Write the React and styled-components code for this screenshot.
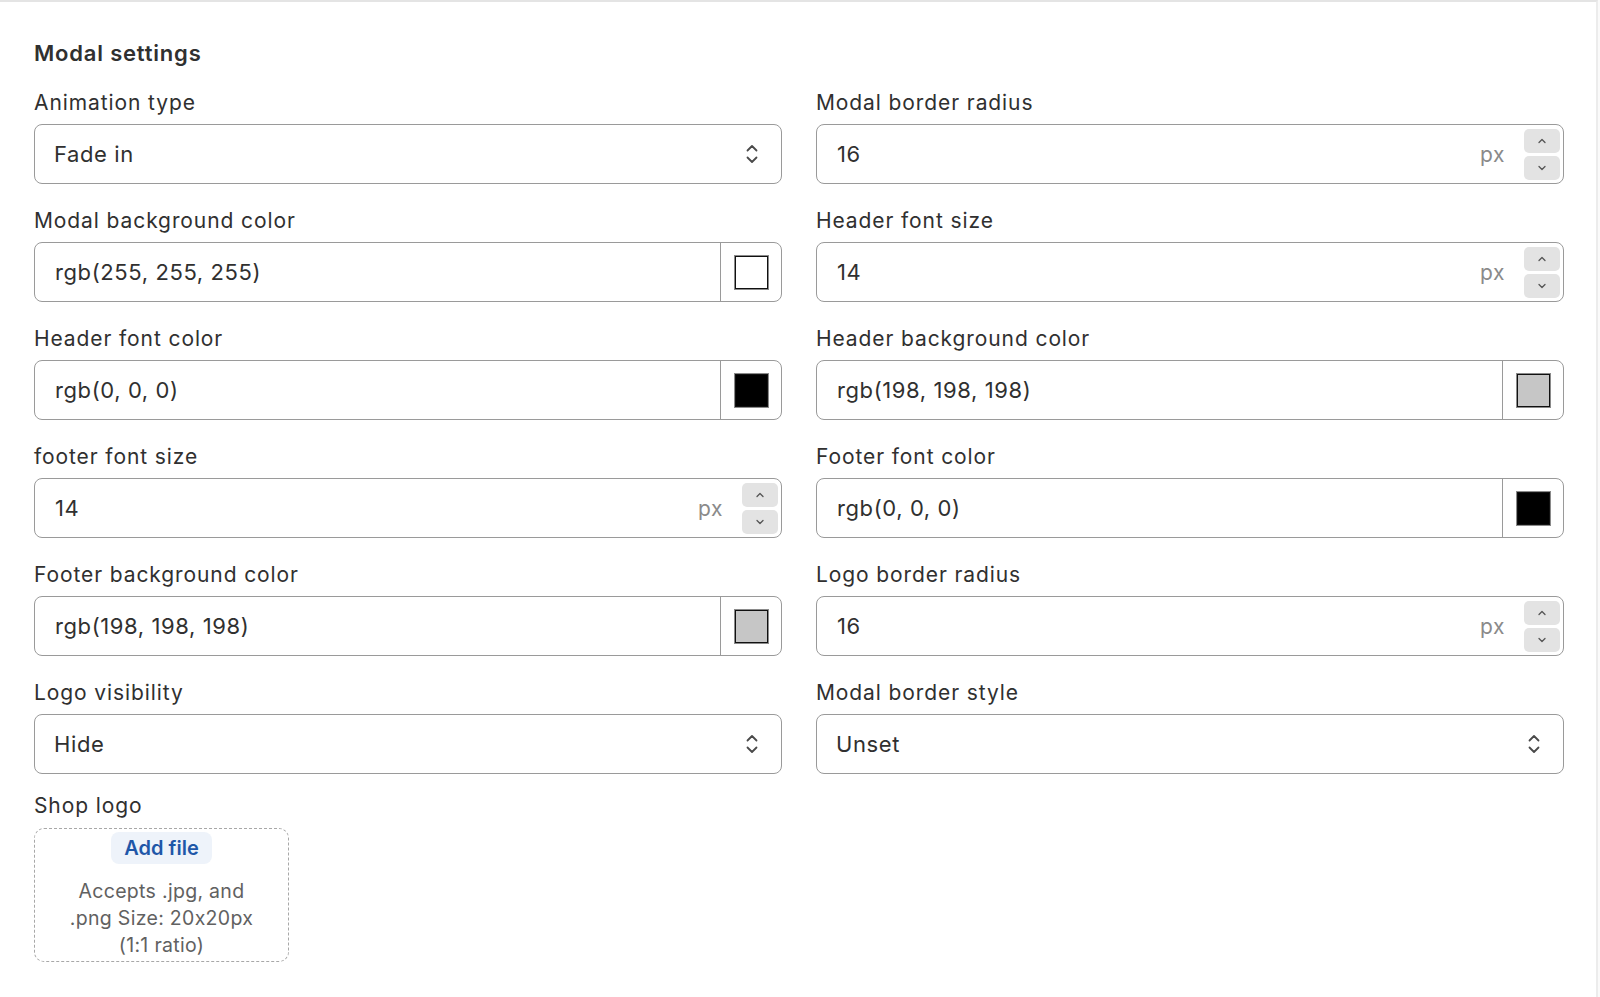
import React from 'react'
import styled, { createGlobalStyle } from 'styled-components'

const GlobalStyle = createGlobalStyle`
  body {
    margin: 0;
    background: #fafafa;
    font-family: Inter, "Noto Sans", sans-serif;
    font-feature-settings: "calt" 0;
    color: #303030;
  }
`

const Page = styled.div`
  box-sizing: border-box;
  width: 1598px;
  min-height: 997px;
  background: #fff;
  border-top: 2px solid #e4e4e4;
  border-right: 2px solid #ececec;
  padding: 37px 32px 40px 34px;
`

const Heading = styled.h2`
  margin: 0 0 24px;
  font-size: 22px;
  line-height: 28px;
  font-weight: 600;
  letter-spacing: 0.8px;
  color: #303030;
`

const Grid = styled.div`
  display: grid;
  grid-template-columns: 1fr 1fr;
  column-gap: 34px;
  row-gap: 25px;
`

const Field = styled.div`
  display: flex;
  flex-direction: column;
  gap: 9px;
  margin-top: ${p => (p.$tight ? '-5px' : '0')};
`

const Label = styled.label`
  font-size: 21px;
  line-height: 24px;
  letter-spacing: 0.9px;
  color: #303030;
`

const Box = styled.div`
  box-sizing: border-box;
  height: 60px;
  display: flex;
  align-items: center;
  border: 1.5px solid #9a9a9a;
  border-radius: 8px;
  background: #fff;
  font-size: 22px;
  letter-spacing: 0.6px;
  color: #303030;
  overflow: hidden;
`

const Value = styled.span`
  flex: 1;
  padding-left: ${p => p.$pad || 19}px;
`

const Suffix = styled.span`
  color: #8a8a8a;
  font-size: 21px;
  margin-right: 19px;
`

const Spinner = styled.div`
  display: flex;
  flex-direction: column;
  gap: 3px;
  margin-right: 3px;
`

const SpinButton = styled.div`
  width: 36px;
  height: 24px;
  border-radius: 5px;
  background: #e3e3e3;
  display: flex;
  align-items: center;
  justify-content: center;
  color: #555;
`

const SwatchCell = styled.div`
  align-self: stretch;
  width: 60px;
  border-left: 1.5px solid #9a9a9a;
  display: flex;
  align-items: center;
  justify-content: center;
`

const Swatch = styled.div`
  box-sizing: border-box;
  width: 35px;
  height: 35px;
  background: ${p => p.$color};
  border: 1px solid #8a8a8a;
  box-shadow: inset 0 0 0 1px #111;
`

const SelectIcon = styled.span`
  margin-right: 22px;
  display: flex;
  color: #4a4a4a;
`

const DropZone = styled.div`
  box-sizing: border-box;
  margin-top: 1px;
  width: 255px;
  height: 134px;
  border: 1.5px dashed #a8a8a8;
  border-radius: 10px;
  display: flex;
  flex-direction: column;
  align-items: center;
  padding-top: 3px;
`

const AddButton = styled.div`
  width: 101px;
  height: 32px;
  border-radius: 8px;
  background: #eef3fa;
  color: #1f57a8;
  font-weight: 600;
  font-size: 20px;
  display: flex;
  align-items: center;
  justify-content: center;
`

const Hint = styled.div`
  margin-top: 14px;
  text-align: center;
  color: #616161;
  font-size: 19.5px;
  letter-spacing: 0.3px;
  line-height: 27px;
  width: 210px;
`

const Chevron = ({ down }) => (
  <svg width="10" height="6" viewBox="0 0 10 6" fill="none">
    <path
      d={down ? 'M2 1.5 L5 4.5 L8 1.5' : 'M2 4.5 L5 1.5 L8 4.5'}
      stroke="currentColor"
      strokeWidth="1.3"
      strokeLinecap="round"
      strokeLinejoin="round"
    />
  </svg>
)

const UpDown = () => (
  <svg width="14" height="22" viewBox="0 0 14 22" fill="none">
    <path d="M2.5 7.5 L7 3 L11.5 7.5" stroke="currentColor" strokeWidth="1.8" strokeLinecap="round" strokeLinejoin="round" />
    <path d="M2.5 14.5 L7 19 L11.5 14.5" stroke="currentColor" strokeWidth="1.8" strokeLinecap="round" strokeLinejoin="round" />
  </svg>
)

const SelectField = ({ label, value }) => (
  <Field>
    <Label>{label}</Label>
    <Box>
      <Value>{value}</Value>
      <SelectIcon><UpDown /></SelectIcon>
    </Box>
  </Field>
)

const NumberField = ({ label, value }) => (
  <Field>
    <Label>{label}</Label>
    <Box>
      <Value $pad={20}>{value}</Value>
      <Suffix>px</Suffix>
      <Spinner>
        <SpinButton><Chevron /></SpinButton>
        <SpinButton><Chevron down /></SpinButton>
      </Spinner>
    </Box>
  </Field>
)

const ColorField = ({ label, value, color }) => (
  <Field>
    <Label>{label}</Label>
    <Box>
      <Value $pad={20}>{value}</Value>
      <SwatchCell><Swatch $color={color} /></SwatchCell>
    </Box>
  </Field>
)

export default function App() {
  return (
    <>
      <GlobalStyle />
      <Page>
        <Heading>Modal settings</Heading>
        <Grid>
          <SelectField label="Animation type" value="Fade in" />
          <NumberField label="Modal border radius" value="16" />
          <ColorField label="Modal background color" value="rgb(255, 255, 255)" color="#fff" />
          <NumberField label="Header font size" value="14" />
          <ColorField label="Header font color" value="rgb(0, 0, 0)" color="#000" />
          <ColorField label="Header background color" value="rgb(198, 198, 198)" color="rgb(198, 198, 198)" />
          <NumberField label="footer font size" value="14" />
          <ColorField label="Footer font color" value="rgb(0, 0, 0)" color="#000" />
          <ColorField label="Footer background color" value="rgb(198, 198, 198)" color="rgb(198, 198, 198)" />
          <NumberField label="Logo border radius" value="16" />
          <SelectField label="Logo visibility" value="Hide" />
          <SelectField label="Modal border style" value="Unset" />
          <Field $tight>
            <Label>Shop logo</Label>
            <DropZone>
              <AddButton>Add file</AddButton>
              <Hint>Accepts .jpg, and .png Size: 20x20px (1:1 ratio)</Hint>
            </DropZone>
          </Field>
        </Grid>
      </Page>
    </>
  )
}
